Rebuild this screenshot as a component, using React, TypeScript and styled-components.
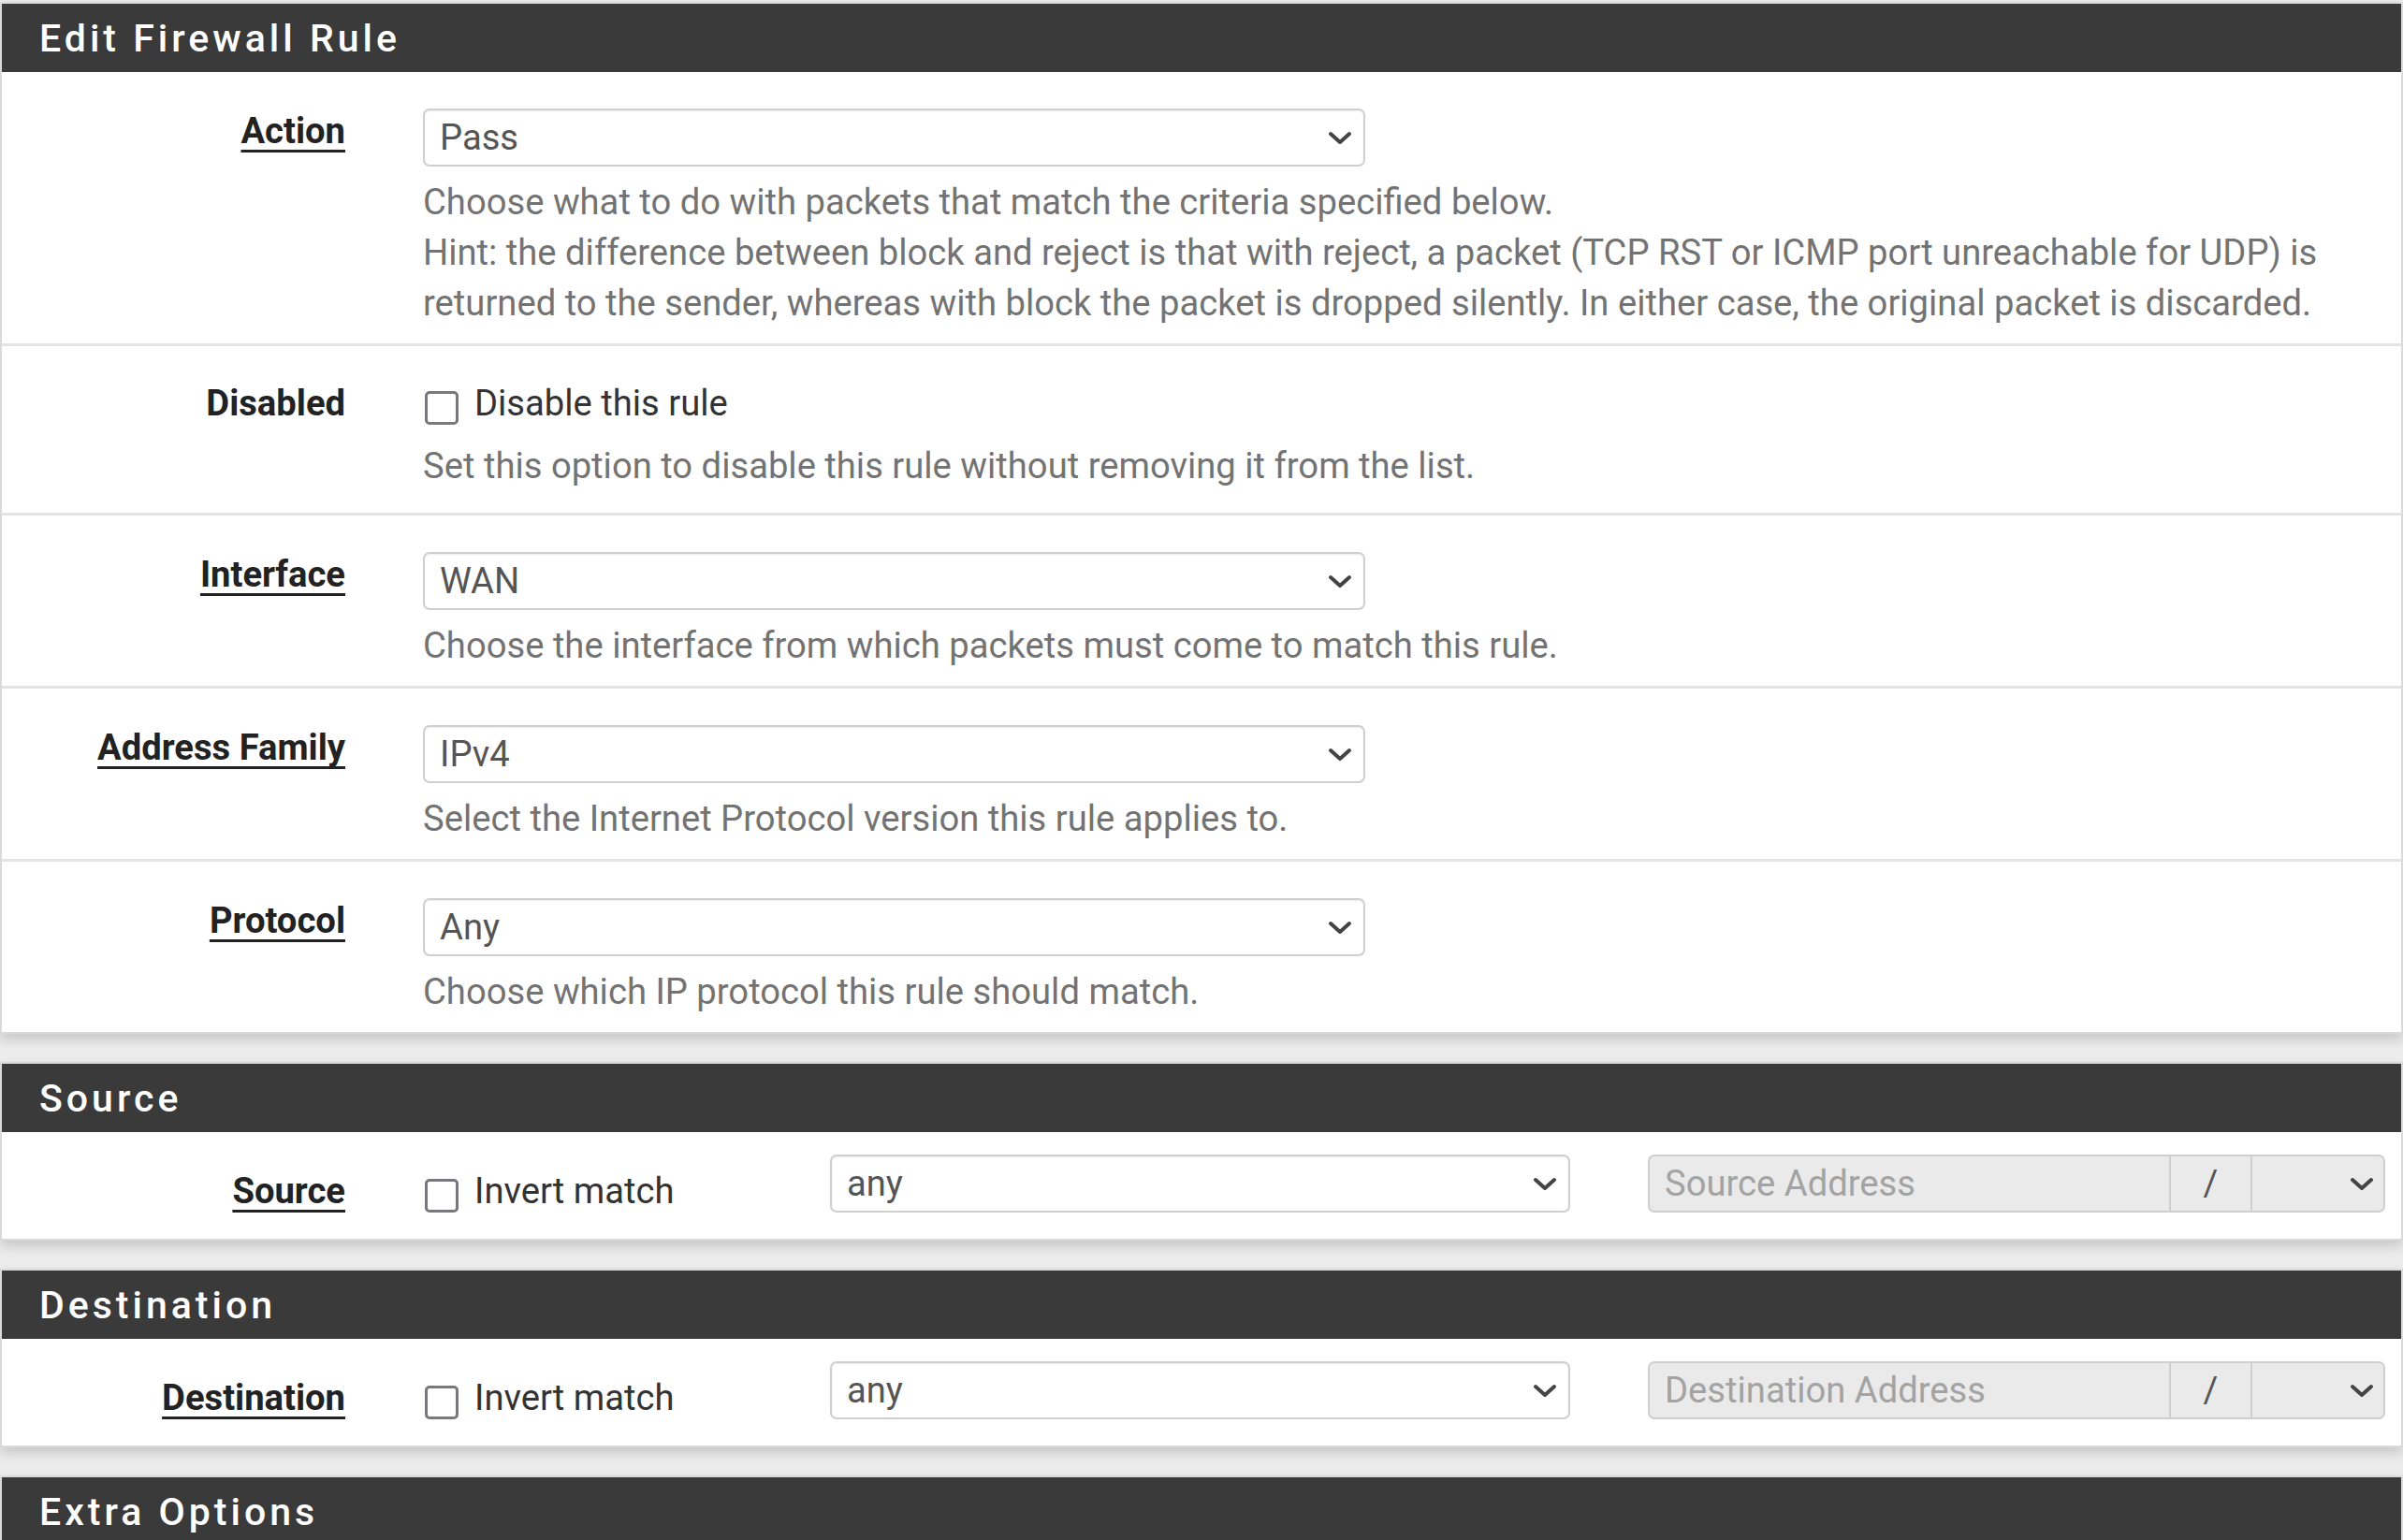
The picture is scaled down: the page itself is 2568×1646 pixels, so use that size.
import styled, { createGlobalStyle } from "styled-components";

const GlobalStyle = createGlobalStyle`
  * {
    box-sizing: border-box;
  }
  html,
  body {
    margin: 0;
    padding: 0;
    overflow: hidden;
    background: #ececec;
  }
  body {
    font-family: Roboto, "Liberation Sans", sans-serif;
    font-size: 38.2px;
    line-height: 54px;
    color: #333;
  }
`;

const Page = styled.div`
  width: 100%;
  padding-top: 2px;
  display: flex;
  flex-direction: column;
  gap: 30px;
`;

const Panel = styled.section`
  background: #fff;
  border: 2px solid #dadada;
  box-shadow: 0 6px 12px rgba(0, 0, 0, 0.16);
`;

const Heading = styled.h2`
  margin: 0;
  height: 73px;
  padding: 0 40px;
  display: flex;
  align-items: center;
  background: #3a3a3a;
  color: #fff;
  font-family: Roboto, "Liberation Sans", sans-serif;
  font-size: 41px;
  font-weight: 500;
  letter-spacing: 4px;
  white-space: nowrap;
`;

const Row = styled.div<{ $top: number; $bottom: number; $last?: boolean }>`
  display: grid;
  grid-template-columns: 367px 1fr;
  column-gap: 83px;
  align-items: start;
  padding: ${(p) => p.$top}px 17px ${(p) => p.$bottom}px 0;
  border-bottom: ${(p) => (p.$last ? "none" : "3px solid #e3e3e3")};
`;

const AddressRow = styled(Row)`
  grid-template-columns: 367px 352px 791px 788px;
`;

const Label = styled.div<{ $link?: boolean }>`
  text-align: right;
  font-weight: 700;
  color: #222;
  line-height: 48px;
  text-decoration: ${(p) => (p.$link ? "underline" : "none")};
  text-decoration-thickness: 3px;
  text-underline-offset: 7px;
  text-decoration-skip-ink: none;
`;

const Field = styled.div`
  display: flex;
  flex-direction: column;
  min-width: 0;
`;

const Select = styled.div<{ $width?: number; $raise?: boolean }>`
  width: ${(p) => (p.$width ? `${p.$width}px` : "100%")};
  height: 62px;
  margin-top: ${(p) => (p.$raise ? "-15px" : "0")};
  padding: 0 12px 0 16px;
  display: flex;
  align-items: center;
  justify-content: space-between;
  background: #fff;
  color: #555;
  border: 2px solid #cfcfcf;
  border-radius: 7px;
  box-shadow: inset 0 1px 2px rgba(0, 0, 0, 0.08);
`;

const Help = styled.div<{ $gap?: number }>`
  margin-top: ${(p) => p.$gap ?? 11}px;
  color: #737373;
`;

const CheckLine = styled.div`
  height: 48px;
  display: flex;
  align-items: center;
  gap: 17px;
  padding-left: 2px;
  color: #333;
  white-space: nowrap;
`;

const Box = styled.span`
  flex: none;
  width: 36px;
  height: 36px;
  margin-top: 10px;
  background: #fff;
  border: 3px solid #78787f;
  border-radius: 5px;
`;

const AddrGroup = styled.div`
  height: 62px;
  margin-top: -15px;
  display: flex;
  background: #eaeaea;
  border: 2px solid #cfcfcf;
  border-radius: 7px;
  overflow: hidden;
`;

const AddrInput = styled.div`
  flex: 1;
  padding-left: 16px;
  display: flex;
  align-items: center;
  color: #a3a3a3;
  white-space: nowrap;
`;

const Slash = styled.div`
  flex: none;
  width: 89px;
  display: flex;
  align-items: center;
  justify-content: center;
  color: #555;
  border-left: 2px solid #cfcfcf;
  border-right: 2px solid #cfcfcf;
`;

const MaskSelect = styled.div`
  flex: none;
  width: 140px;
  padding-right: 10px;
  display: flex;
  align-items: center;
  justify-content: flex-end;
`;

function Chevron() {
  return (
    <svg width="26" height="15" viewBox="0 0 26 15">
      <polyline
        points="3,3 13,12 23,3"
        fill="none"
        stroke="#444"
        strokeWidth="4"
        strokeLinecap="round"
        strokeLinejoin="round"
      />
    </svg>
  );
}

function SelectRow(props: { label: string; value: string; help: React.ReactNode; last?: boolean }) {
  return (
    <Row $top={39} $bottom={16} $last={props.last}>
      <Label $link>{props.label}</Label>
      <Field>
        <Select $width={1007}>
          <span>{props.value}</span>
          <Chevron />
        </Select>
        <Help>{props.help}</Help>
      </Field>
    </Row>
  );
}

function AddressPanel(props: { title: string; placeholder: string }) {
  return (
    <Panel>
      <Heading>{props.title}</Heading>
      <AddressRow $top={39} $bottom={27} $last>
        <Label $link>{props.title}</Label>
        <CheckLine>
          <Box />
          Invert match
        </CheckLine>
        <Select $raise>
          <span>any</span>
          <Chevron />
        </Select>
        <AddrGroup>
          <AddrInput>{props.placeholder}</AddrInput>
          <Slash>/</Slash>
          <MaskSelect>
            <Chevron />
          </MaskSelect>
        </AddrGroup>
      </AddressRow>
    </Panel>
  );
}

export default function App() {
  return (
    <>
      <GlobalStyle />
      <Page>
        <Panel>
          <Heading>Edit Firewall Rule</Heading>
          <SelectRow
            label="Action"
            value="Pass"
            help={
              <>
                Choose what to do with packets that match the criteria specified below.
                <br />
                Hint: the difference between block and reject is that with reject, a packet
                (TCP RST or ICMP port unreachable for UDP) is returned to the sender, whereas
                with block the packet is dropped silently. In either case, the original packet
                is discarded.
              </>
            }
          />
          <Row $top={37} $bottom={23}>
            <Label>Disabled</Label>
            <Field>
              <CheckLine>
                <Box />
                Disable this rule
              </CheckLine>
              <Help $gap={16}>
                Set this option to disable this rule without removing it from the list.
              </Help>
            </Field>
          </Row>
          <SelectRow
            label="Interface"
            value="WAN"
            help="Choose the interface from which packets must come to match this rule."
          />
          <SelectRow
            label="Address Family"
            value="IPv4"
            help="Select the Internet Protocol version this rule applies to."
          />
          <SelectRow
            label="Protocol"
            value="Any"
            help="Choose which IP protocol this rule should match."
            last
          />
        </Panel>
        <AddressPanel title="Source" placeholder="Source Address" />
        <AddressPanel title="Destination" placeholder="Destination Address" />
        <Panel>
          <Heading>Extra Options</Heading>
        </Panel>
      </Page>
    </>
  );
}
